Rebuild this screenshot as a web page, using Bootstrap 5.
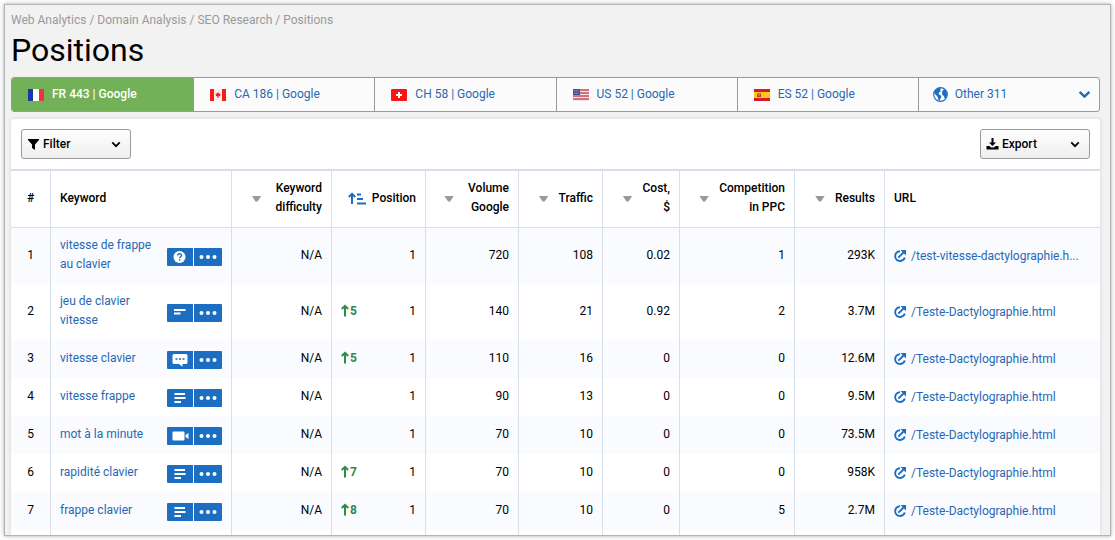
<!DOCTYPE html>
<html lang="en">
<head>
<meta charset="utf-8">
<meta name="viewport" content="width=device-width, initial-scale=1">
<title>Positions</title>
<link href="https://cdn.jsdelivr.net/npm/bootstrap@5.3.0/dist/css/bootstrap.min.css" rel="stylesheet">
<style>
  :root { --link: #2768b4; --btn: #1b6ec2; --line: #d9deeb; }
  body { font: 12px/19px Roboto, Arial, sans-serif; color: #000; background: #fff; padding: 5px; }
  a { color: var(--link); text-decoration: none; }
  .screen { height: calc(100vh - 10px); overflow: hidden; background: #f2f2f2; padding: 6px 10px 0 6px; box-shadow: 0 0 1px 1px #b4b4b4, 0 0 5px 1px #bbb; }
  .crumbs, .crumbs a { color: #999; }
  .crumbs { height: 19px; }
  h1 { font-size: 32px; line-height: 40px; font-weight: 400; margin: 0 0 7px; }
  .engines { display: grid; grid-template-columns: repeat(6, minmax(0, 1fr)); border: 1px solid #999; border-radius: 3px; background: #fbfbfb; overflow: hidden; }
  .engines a, .engines button { height: 33px; padding: 0 16px; border: 0; background: none; color: var(--link); display: flex; align-items: center; white-space: nowrap; }
  .engines > * + * { border-left: 1px solid #999 !important; }
  .engines .current { background: #73b158; color: #fff; font-weight: 500; }
  .flag { width: 16px; height: 12px; margin-right: 8px; }
  .globe { width: 15px; height: 15px; margin-right: 7px; }
  .engines button { padding: 0 8px 0 14px; }
  .sheet { margin-top: 7px; background: #fff; border-radius: 3px 3px 0 0; box-shadow: 0 0 4px rgba(0,0,0,.12); }
  .tools { padding: 10px; }
  .tool { width: 110px; height: 30px; padding: 0 9px 0 5px; border: 1px solid #999; border-radius: 3px; background: linear-gradient(#fff, #eee); font-weight: 500; color: #000; display: flex; align-items: center; }
  .tool svg:first-child { width: 13px; height: 12px; margin-right: 3px; }
  .chev { width: 12px; height: 8px; margin-left: auto; }
  .tool .chev { width: 10px; height: 7px; }
  .engines .chev { width: 13px; height: 9px; }
  .positions { width: 100%; table-layout: fixed; border-top: 2px solid var(--line); border-collapse: separate; border-spacing: 0; }
  .positions th, .positions td { padding: 8px 9px 10px; border-right: 1px solid var(--line); text-align: right; vertical-align: middle; }
  .positions th:last-child, .positions td:last-child { border-right: 0; text-align: left; }
  .positions th:first-child, .positions td:first-child { text-align: center; }
  .positions th { height: 57px; border-bottom: 1px solid var(--line); font-weight: 500; }
  .positions td { height: 38px; }
  .positions .term { text-align: left; }
  .positions tbody tr:nth-child(odd) { background: #fafbff; }
  .positions .tail td { height: 6px; padding: 0; }
  .positions tbody tr.tail { background: #fff; }
  .sort { display: flex; align-items: center; justify-content: flex-end; }
  .tri { width: 10px; height: 6px; background: #999; clip-path: polygon(0 0, 100% 0, 60% 100%, 40% 100%); flex: none; margin: 1px 10px 0 0; }
  .sort.roomy .tri { margin-right: 14px; }
  .rank { width: 18px; height: 13px; margin-right: 6px; }
  .act { display: flex; gap: 1px; margin: 3px 0 -1px auto; }
  .act button { width: 28px; height: 18px; padding: 0; border: 0; background: var(--btn); display: flex; align-items: center; justify-content: center; border-radius: 0 1px 1px 0; }
  .act button:first-child { width: 26px; border-radius: 1px 0 0 1px; }
  .act svg { width: 18px; height: 14px; }
  .gain { color: #2e8b4a; font-weight: 700; }
  .gain svg { width: 8px; height: 13px; margin: 0 1px 0 0; vertical-align: -2px; }
  .positions .url { padding: 9px; white-space: nowrap; }
  .url svg { width: 12px; height: 12px; margin-right: 5px; vertical-align: -2px; }
</style>
</head>
<body>
<svg class="d-none">
  <symbol id="down" viewBox="0 0 12 8"><path d="M1.500 1.500 6 6l4.500-4.500" fill="none" stroke="currentColor" stroke-width="2.200"/></symbol>
  <symbol id="ask" viewBox="0 0 18 14"><circle cx="8.500" cy="7" r="6" fill="#fff"/><path d="M6.600 5.600c0-2.400 3.900-2.300 3.900-.2 0 1.400-1.900 1.300-1.900 2.900M8.600 9.300v1.500" fill="none" stroke="#1b6ec2" stroke-width="1.400"/></symbol>
  <symbol id="short" viewBox="0 0 18 14"><path d="M3 4h11.500M3 7.500h6.500" stroke="#fff" stroke-width="2"/></symbol>
  <symbol id="text" viewBox="0 0 18 14"><path d="M3.500 3h10.500M3.500 7h11M3.500 11h6.500" stroke="#fff" stroke-width="2"/></symbol>
  <symbol id="chat" viewBox="0 0 18 14"><path d="M3 1h12q1.500 0 1.500 1.500v7q0 1.500-1.500 1.500h-3.500v2.800L8 11H3Q1.500 11 1.500 9.500v-7Q1.500 1 3 1z" fill="#fff"/><path d="M4.500 5.200h2v1.600h-2zM8 5.200h2v1.600H8zM11.500 5.200h2v1.600h-2z" fill="#1b6ec2"/></symbol>
  <symbol id="video" viewBox="0 0 18 14"><rect x="1.500" y="2.500" width="12" height="9" rx="1" fill="#fff"/><path d="M14.500 6 17.500 4v6l-3-2z" fill="#fff"/></symbol>
  <symbol id="dots" viewBox="0 0 18 14"><g fill="#fff"><circle cx="2.500" cy="7" r="2"/><circle cx="9" cy="7" r="2"/><circle cx="15.500" cy="7" r="2"/></g></symbol>
  <symbol id="up" viewBox="0 0 8 13"><path d="M4 12.500V2M.8 5 4 1.800 7.200 5" fill="none" stroke="currentColor" stroke-width="2"/></symbol>
  <symbol id="ext" viewBox="0 0 12 12"><path d="M6 1.200A4.900 4.900 0 1 0 10.800 7.500M4.300 7.700 9.500 2.500" fill="none" stroke="#1b6ec2" stroke-width="1.900"/><path d="M6.500 0H12v5.500z" fill="#1b6ec2"/></symbol>
</svg>
<main class="screen">
  <nav class="crumbs" aria-label="Breadcrumb"><a href="#">Web Analytics</a> / <a href="#">Domain Analysis</a> / <a href="#">SEO Research</a> / <span>Positions</span></nav>
  <h1>Positions</h1>
  <nav class="engines" aria-label="Search engines">
    <a href="#" class="current"><svg class="flag" viewBox="0 0 16 12"><path d="M0 0h5v12H0z" fill="#1c35a8"/><path d="M5 0h6v12H5z" fill="#fff"/><path d="M11 0h5v12h-5z" fill="#ef3340"/></svg>FR 443 | Google</a>
    <a href="#"><svg class="flag" viewBox="0 0 16 12"><path d="M0 0h16v12H0z" fill="#f4f0f0"/><path d="M0 0h4v12H0zM12 0h4v12h-4z" fill="#f81b1b"/><path d="m8 3 1 1.500L10.500 5 10 7 8.500 7.500V9h-1V7.500L6 7l-.5-2L7 4.500z" fill="#f81b1b"/></svg>CA 186 | Google</a>
    <a href="#"><svg class="flag" viewBox="0 0 16 12"><rect width="16" height="12" rx="1" fill="#f91414"/><path d="M7 3h2v2h2v2H9v2H7V7H5V5h2z" fill="#fff"/></svg>CH 58 | Google</a>
    <a href="#"><svg class="flag" viewBox="0 0 16 12"><path d="M0 0h16v12H0z" fill="#f1e4e7"/><path d="M0 1h16M0 4h16M0 7h16M0 10h16" stroke="#c84a5c" stroke-width="1.600"/><path d="M0 0h7v6H0z" fill="#46508e"/><path d="M1 1.500h5M1.500 3h5M1 4.500h5" stroke="#c5cae0" stroke-width=".7" stroke-dasharray=".7 1"/></svg>US 52 | Google</a>
    <a href="#"><svg class="flag" viewBox="0 0 16 12"><path d="M0 0h16v12H0z" fill="#d9182b"/><path d="M0 3h16v6H0z" fill="#ffc61a"/><path d="M3 4.500h4V8H3z" fill="#b8441e"/><path d="M4.500 5h1v2h-1z" fill="#e5a06a"/></svg>ES 52 | Google</a>
    <button type="button"><svg class="globe" viewBox="0 0 15 15"><circle cx="7.500" cy="7.500" r="6.800" fill="#fff" stroke="#1b6ec2" stroke-width="1.200"/><path d="M2 3.500 5.500 1l3 .5L7 3l1 1.200-2 1.300-.5 1.500L7 8l1.500 1-.7 2-1.300 2.800-1-.3L5 10.500 3.500 8.500 1 6zM9.500 4l1.500-2 2 1.500L14.300 7l-1.300 4-1.500.5-.5-2.500-1.700-1L9 5.500z" fill="#1b6ec2"/></svg>Other 311<svg class="chev"><use href="#down"/></svg></button>
  </nav>
  <section class="sheet">
    <div class="tools d-flex justify-content-between">
      <button type="button" class="tool"><svg viewBox="0 0 13 12"><path d="M1 1h11v1L8 6.500V12L5 10V6.500L1 2z"/></svg>Filter<svg class="chev"><use href="#down"/></svg></button>
      <button type="button" class="tool"><svg viewBox="0 0 13 12"><path d="M5.500 0h2v4.500H10l-3.500 3.500L3 4.500h2.500zM.5 8h2.700l2 1.500h2.600l2-1.500h2.700v3.500H.5z"/></svg>Export<svg class="chev"><use href="#down"/></svg></button>
    </div>
    <table class="positions">
      <colgroup><col style="width:40px"><col style="width:181px"><col style="width:100px"><col style="width:94px"><col style="width:93px"><col style="width:84px"><col style="width:77px"><col style="width:115px"><col style="width:90px"><col></colgroup>
      <thead><tr>
        <th>#</th><th class="term">Keyword</th>
        <th><div class="sort roomy"><i class="tri"></i><span>Keyword<br>difficulty</span></div></th>
        <th><div class="sort"><svg class="rank" viewBox="0 0 18 13"><path d="M4 12V2M.8 5 4 1.800 7.200 5M9 2.500h4M9 7h6M9 11.500h9" fill="none" stroke="#1b6ec2" stroke-width="2"/></svg><span>Position</span></div></th>
        <th><div class="sort roomy"><i class="tri"></i><span>Volume<br>Google</span></div></th>
        <th><div class="sort"><i class="tri"></i><span>Traffic</span></div></th>
        <th><div class="sort"><i class="tri"></i><span>Cost,<br>$</span></div></th>
        <th><div class="sort"><i class="tri"></i><span>Competition<br>in PPC</span></div></th>
        <th><div class="sort"><i class="tri"></i><span>Results</span></div></th>
        <th>URL</th>
      </tr></thead>
      <tbody id="rows"></tbody>
    </table>
  </section>
</main>
<script>
  const rows = [
    ['vitesse de frappe<br>au clavier', 'ask', 'Question', '', 720, 108, '0.02', 1, '293K', '/test-vitesse-dactylographie.h...'],
    ['jeu de clavier<br>vitesse', 'short', 'Snippet', 5, 140, 21, '0.92', 2, '3.7M'],
    ['vitesse clavier', 'chat', 'Reviews', 5, 110, 16, 0, 0, '12.6M'],
    ['vitesse frappe', 'text', 'Text', '', 90, 13, 0, 0, '9.5M'],
    ['mot à la minute', 'video', 'Video', '', 70, 10, 0, 0, '73.5M'],
    ['rapidité clavier', 'text', 'Text', 7, 70, 10, 0, 0, '958K'],
    ['frappe clavier', 'text', 'Text', 8, 70, 10, 0, 5, '2.7M']
  ];
  const icon = name => `<svg><use href="#${name}"/></svg>`;
  document.getElementById('rows').innerHTML = rows.map(([term, kind, label, gain, volume, traffic, cost, ppc, results, url = '/Teste-Dactylographie.html'], i) => `<tr>
    <td>${i + 1}</td>
    <td class="term"><div class="d-flex align-items-center"><a href="#">${term}</a><div class="act"><button type="button" aria-label="${label}">${icon(kind)}</button><button type="button" aria-label="More">${icon('dots')}</button></div></div></td>
    <td>N/A</td>
    <td><div class="d-flex justify-content-between"><span class="gain">${gain ? icon('up') + gain : ''}</span><span>1</span></div></td>
    <td>${volume}</td><td>${traffic}</td><td>${cost}</td><td>${ppc}</td><td>${results}</td>
    <td class="url"><a href="#">${icon('ext')}${url}</a></td></tr>`).join('') + '<tr class="tail">' + '<td></td>'.repeat(10) + '</tr>';
</script>
<script src="https://cdn.jsdelivr.net/npm/bootstrap@5.3.0/dist/js/bootstrap.bundle.min.js"></script>
</body>
</html>
